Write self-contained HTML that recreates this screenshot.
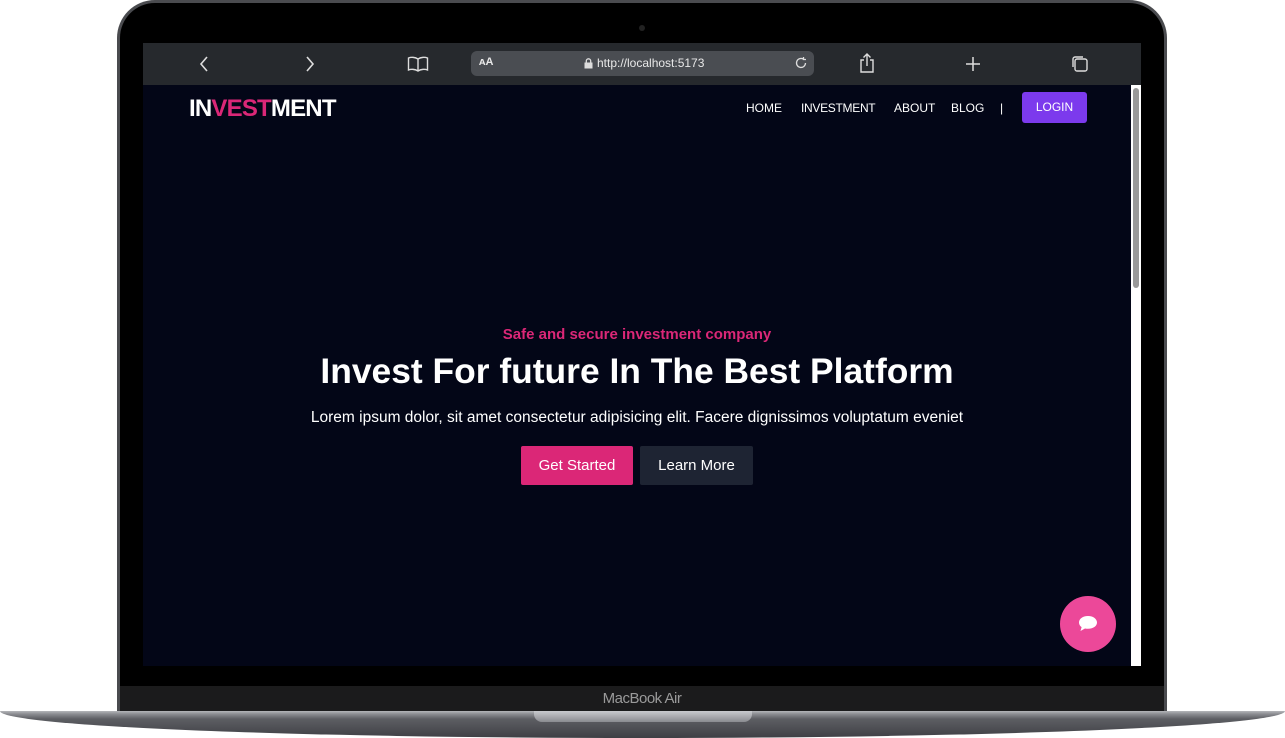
<!DOCTYPE html>
<html><head><meta charset="utf-8"><style>
*{margin:0;padding:0;box-sizing:border-box}
body{width:1285px;height:738px;background:#fff;position:relative;overflow:hidden;font-family:"Liberation Sans",sans-serif}
.lid{position:absolute;left:117px;top:0;width:1050px;height:716px;background:#000;border-radius:38px 38px 0 0;border:3px solid #4a4b4f;border-bottom:none}
.cam{position:absolute;left:639px;top:25px;width:6px;height:6px;border-radius:50%;background:#222}
.bezel{position:absolute;left:120px;top:686px;width:1044px;height:26px;background:#1b1b1c;color:#9a9a9a;font-size:15px;text-align:center;line-height:26px;letter-spacing:-0.5px}
.base{position:absolute;left:0;top:711px;width:1285px;height:27px;background:linear-gradient(#b5b6ba 0,#8c8d92 3px,#5d5e63 8px,#3e3f44 100%);border-radius:0 0 50% 50%/0 0 100% 100%}
.notch{position:absolute;left:534px;top:711px;width:218px;height:11px;background:linear-gradient(#c9cace,#8a8b90);border-radius:0 0 8px 8px}
.screen{position:absolute;left:143px;top:43px;width:998px;height:623px;background:#030617;overflow:hidden}
.bar{position:absolute;left:0;top:0;width:998px;height:42px;background:#26292d}
.url{position:absolute;left:328px;top:8px;width:343px;height:25px;background:#4a4d52;border-radius:6px;color:#e8e8e8;font-size:12px}
.scroll{position:absolute;left:988px;top:42px;width:10px;height:581px;background:#fff}
.thumb{position:absolute;left:2px;top:3px;width:6px;height:200px;background:#999;border-radius:3px}
.logo{position:absolute;left:46px;top:52px;font-size:24px;font-weight:bold;color:#fff;letter-spacing:-0.8px}
.nav{position:absolute;top:58px;color:#fff;font-size:12px}
.login{position:absolute;left:879px;top:49px;width:65px;height:31px;background:#7c3aed;border-radius:3px;color:#fff;font-size:12px;text-align:center;line-height:31px}
.c{position:absolute;left:0;width:988px;text-align:center}
.btn{position:absolute;top:403px;height:39px;color:#fff;font-size:15px;line-height:39px;text-align:center;border-radius:2px}
.chat{position:absolute;left:917px;top:553px;width:56px;height:56px;border-radius:50%;background:#ec4899}
</style></head><body>
<div class="lid"></div>
<div class="cam"></div>
<div class="bezel">MacBook Air</div>
<div class="base"></div>
<div class="notch"></div>
<div class="screen">
 <div class="bar">
  <svg style="position:absolute;left:55px;top:12px" width="12" height="18"><path d="M9 2L3 9l6 7" stroke="#ddd" stroke-width="1.6" fill="none"/></svg>
  <svg style="position:absolute;left:161px;top:12px" width="12" height="18"><path d="M3 2l6 7-6 7" stroke="#ddd" stroke-width="1.6" fill="none"/></svg>
  <svg style="position:absolute;left:264px;top:12px" width="22" height="18"><path d="M11 4C8 2 4 2 1.5 3v12c2.5-1 6.5-1 9.5 1 3-2 7-2 9.5-1V3C18 2 14 2 11 4v12" stroke="#ddd" stroke-width="1.4" fill="none"/></svg>
  <div class="url"><span style="position:absolute;left:8px;top:5px;font-size:11px;font-weight:bold">ᴀA</span>
   <svg style="position:absolute;left:113px;top:7px" width="9" height="11"><rect x="0.5" y="4.5" width="8" height="6" fill="#ddd"/><path d="M2.3 5V3a2.2 2.2 0 0 1 4.4 0v2" stroke="#ddd" stroke-width="1.3" fill="none"/></svg>
   <span style="position:absolute;left:126px;top:5px">http://localhost:5173</span>
   <svg style="position:absolute;left:322px;top:4px" width="16" height="16"><path d="M12.5 8a4.5 4.5 0 1 1-2-3.8M10.5 2v2.5H13" stroke="#ddd" stroke-width="1.3" fill="none"/></svg></div>
  <svg style="position:absolute;left:714px;top:9px" width="20" height="22"><path d="M7 8H4v12h12V8h-3M10 14V2M6.5 5.5L10 2l3.5 3.5" stroke="#ddd" stroke-width="1.4" fill="none"/></svg>
  <svg style="position:absolute;left:821px;top:12px" width="18" height="18"><path d="M9 2v14M2 9h14" stroke="#ddd" stroke-width="1.5"/></svg>
  <svg style="position:absolute;left:927px;top:11px" width="20" height="20"><rect x="5" y="5" width="12" height="12" rx="2" stroke="#ddd" stroke-width="1.4" fill="none"/><path d="M13 3H5a2 2 0 0 0-2 2v8" stroke="#ddd" stroke-width="1.4" fill="none"/></svg>
 </div>
 <div class="logo">IN<span style="color:#db2777">VEST</span>MENT</div>
 <div class="nav" style="left:603px">HOME</div>
 <div class="nav" style="left:658px;letter-spacing:-0.3px">INVESTMENT</div>
 <div class="nav" style="left:751px">ABOUT</div>
 <div class="nav" style="left:808px">BLOG</div>
 <div class="nav" style="left:857px">|</div>
 <div class="login">LOGIN</div>
 <div class="c" style="top:283px;color:#db2777;font-weight:bold;font-size:15px">Safe and secure investment company</div>
 <div class="c" style="top:308px;color:#fff;font-weight:bold;font-size:35.4px">Invest For future In The Best Platform</div>
 <div class="c" style="top:366px;color:#fff;font-size:15.5px">Lorem ipsum dolor, sit amet consectetur adipisicing elit. Facere dignissimos voluptatum eveniet</div>
 <div class="btn" style="left:378px;width:112px;background:#db2777">Get Started</div>
 <div class="btn" style="left:497px;width:113px;background:#1e2433">Learn More</div>
 <div class="chat"><svg style="position:absolute;left:17px;top:18px" width="22" height="20"><path d="M11 2C5.5 2 2 5 2 8.5c0 2 1 3.5 2.6 4.6L3.5 17l4.5-2.5c1 .2 2 .3 3 .3 5.5 0 9-3 9-6.3S16.5 2 11 2z" fill="#fff"/></svg></div>
 <div class="scroll"><div class="thumb"></div></div>
</div>
</body></html>
